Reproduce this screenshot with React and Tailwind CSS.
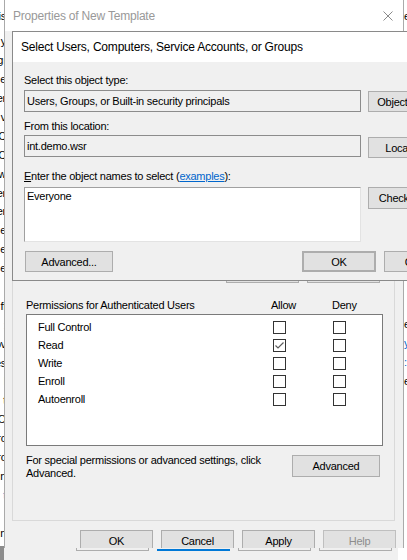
import React from 'react'

const LEFT_ROWS = [
  ['y', false], ['gı', false], ['e', false], ['er', false], ['v', false], ['C', false], ['C', false],
  ['ow', false], ['er', false], ['er', false], ['e', false], ['e', false], ['e', false], ['\u00a0', false],
  ['ff', false], [': ', true], ['ov', false], ['es', false], ['l', false], ['t', false], ['O', false],
  ['rc', false], ['rc', false], ['n', false], ['t', true], ['\u00a0', false], ['n', false],
]

const RIGHT_ROWS = [['e', false], ['y', true], [':', true], ['e', false]]

const PERMS = [
  { name: 'Full Control', allow: false },
  { name: 'Read', allow: true },
  { name: 'Write', allow: false },
  { name: 'Enroll', allow: false },
  { name: 'Autoenroll', allow: false },
]

function Btn({ children, className = '' }) {
  return (
    <div className={`flex shrink-0 items-center justify-center border border-[#adadad] bg-[#e1e1e1] whitespace-nowrap ${className}`}>
      {children}
    </div>
  )
}

function Check({ checked }) {
  return (
    <div className="flex h-[13px] w-[13px] shrink-0 items-center justify-center border border-[#333333] bg-white">
      {checked && (
        <svg width="11" height="11" viewBox="0 0 11 11">
          <path d="M1.5 5.5 L4 8 L9.5 2.5" fill="none" stroke="#5c5c5c" strokeWidth="1.2" />
        </svg>
      )}
    </div>
  )
}

export default function App() {
  return (
    <div className="relative h-[560px] w-[407px] overflow-hidden bg-white font-['Liberation_Sans',Arial,sans-serif] text-[11px] leading-[14px] tracking-[-0.25px] text-black">
      {/* window behind, left strip */}
      <div className="absolute left-0 top-0 h-[548px] w-[6px] overflow-hidden">
        <div className="flex h-[32px] items-center justify-end whitespace-nowrap">This</div>
        <div className="flex flex-col">
          {LEFT_ROWS.map(([t, blue], i) => (
            <div key={i} className={`flex h-[18.9px] items-center justify-end whitespace-nowrap ${blue ? 'text-[#0066cc]' : ''}`}>
              {t}
            </div>
          ))}
        </div>
      </div>
      <div className="absolute bottom-0 left-0 h-[14px] w-[4px] bg-[#8c8c8c]" />

      {/* window behind, right strip */}
      <div className="absolute left-[404px] top-[9px] whitespace-nowrap">e</div>
      <div className="absolute left-[404px] top-[314px] flex flex-col">
        {RIGHT_ROWS.map(([t, blue], i) => (
          <div key={i} className={`flex h-[19px] items-center whitespace-nowrap ${blue ? 'text-[#0066cc]' : ''}`}>{t}</div>
        ))}
      </div>

      {/* ghost strip under the window */}
      <div className="absolute left-[4px] top-[548px] flex h-[12px] w-[394px] gap-[8px] bg-[#f0f0f0] pl-[72px]">
        <div className="h-[3px] w-[73px] border-x border-b border-[#adadad]" />
        <div className="h-[3px] w-[73px] border-b-2 border-[#0078d7]" />
        <div className="h-[3px] w-[73px] border-x border-b border-[#adadad]" />
        <div className="h-[3px] w-[73px] border-x border-b border-[#adadad]" />
      </div>

      {/* Properties of New Template */}
      <div className="absolute left-[4px] top-0 flex h-[548px] w-[400px] flex-col overflow-hidden border-x border-[#aaaaaa] bg-[#f0f0f0]">
        <div className="flex h-[31px] shrink-0 items-center justify-between bg-white pl-[8px] pr-[10px]">
          <span className="text-[12px] tracking-[-0.2px] text-[#999999]">Properties of New Template</span>
          <svg width="10" height="10" viewBox="0 0 10 10">
            <path d="M0.5 0.5 L9.5 9.5 M9.5 0.5 L0.5 9.5" stroke="#8a8a8a" strokeWidth="1" />
          </svg>
        </div>

        <div className="ml-[7px] mt-[209px] flex h-[281px] w-[383px] shrink-0 flex-col border border-[#d9d9d9]">
          <div className="mt-[21px] flex justify-end gap-[8px] pr-[14px]">
            <Btn className="h-[21px] w-[73px]">Add...</Btn>
            <Btn className="h-[21px] w-[73px]">Remove</Btn>
          </div>

          <div className="mt-[15px] flex pl-[13px]">
            <span className="w-[245px]">Permissions for Authenticated Users</span>
            <span className="w-[61px]">Allow</span>
            <span>Deny</span>
          </div>

          <div className="ml-[13px] mt-[2px] flex h-[132px] w-[357px] flex-col border border-[#7a7a7a] bg-white pt-[3px]">
            {PERMS.map((p) => (
              <div key={p.name} className="flex h-[18px] items-center pl-[11px]">
                <span className="w-[235px]">{p.name}</span>
                <Check checked={p.allow} />
                <div className="w-[47px]" />
                <Check checked={false} />
              </div>
            ))}
          </div>

          <div className="mt-[8px] flex pl-[13px]">
            <p className="w-[266px] leading-[13px]">
              For special permissions or advanced settings, click<br />Advanced.
            </p>
            <Btn className="mt-[1px] h-[22px] w-[88px]">Advanced</Btn>
          </div>
        </div>

        <div className="mt-[9px] flex justify-end gap-[8px] pr-[7px]">
          <Btn className="h-[21px] w-[73px]">OK</Btn>
          <Btn className="h-[21px] w-[73px]">Cancel</Btn>
          <Btn className="h-[21px] w-[73px]">Apply</Btn>
          <Btn className="h-[21px] w-[73px] border-[#bfbfbf] bg-[#cccccc] text-[#8d8d8d]">Help</Btn>
        </div>
      </div>

      {/* Select Users, Computers, Service Accounts, or Groups */}
      <div className="absolute left-[12px] top-[31px] flex h-[250px] w-[420px] flex-col overflow-hidden border border-[#8a8a8a] bg-[#f0f0f0]">
        <div className="flex h-[30px] shrink-0 items-center bg-white pl-[8px] text-[12px] tracking-[-0.2px]">
          Select Users, Computers, Service Accounts, or Groups
        </div>

        <div className="flex flex-col pl-[11px]">
          <div className="flex gap-[7px]">
            <div className="flex w-[337px] shrink-0 flex-col">
              <span className="mt-[11px]">Select this object type:</span>
              <div className="mt-[3px] flex h-[22px] items-center border border-[#8c8c8c] pl-[2px]">
                Users, Groups, or Built-in security principals
              </div>
              <span className="mt-[7px]">From this location:</span>
              <div className="mt-[2px] flex h-[22px] items-center border border-[#8c8c8c] pl-[2px]">
                int.demo.wsr
              </div>
              <span className="mt-[12px]">
                <span className="underline">E</span>nter the object names to select (
                <span className="text-[#0066cc] underline">examples</span>):
              </span>
              <div className="mt-[4px] h-[55px] border border-b-[#e3e3e3] border-l-[#a0a0a0] border-r-[#e3e3e3] border-t-[#a0a0a0] bg-white pl-[2px] pt-[1px]">
                Everyone
              </div>
            </div>
            <div className="flex shrink-0 flex-col">
              <Btn className="mt-[29px] h-[21px] w-[88px]">Object Types...</Btn>
              <Btn className="mt-[25px] h-[21px] w-[88px]">Locations...</Btn>
              <Btn className="mt-[29px] h-[22px] w-[88px]">Check Names</Btn>
            </div>
          </div>

          <div className="mt-[9px] flex pl-[1px]">
            <Btn className="h-[21px] w-[88px]">Advanced...</Btn>
            <Btn className="ml-[189px] h-[21px] w-[74px] border-2 border-[#0078d7]">OK</Btn>
            <Btn className="ml-[8px] h-[21px] w-[74px]">Cancel</Btn>
          </div>
        </div>
      </div>
    </div>
  )
}
